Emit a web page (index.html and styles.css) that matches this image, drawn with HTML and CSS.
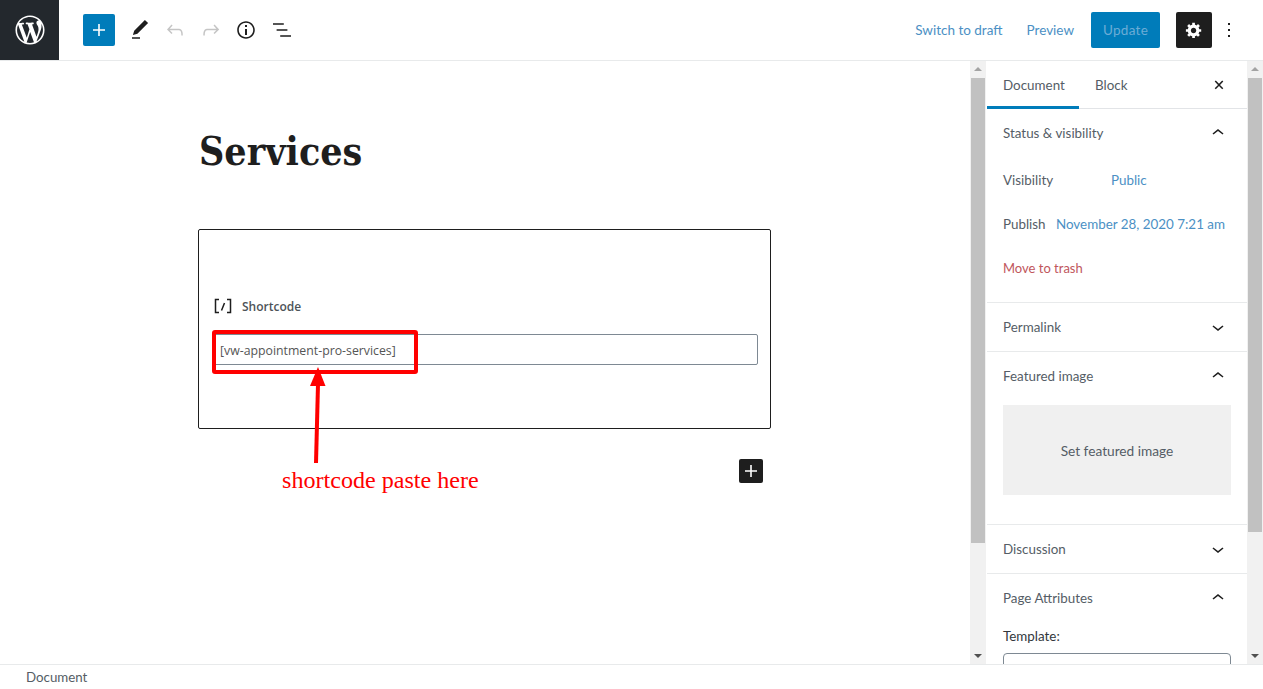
FILE: index.html
```html
<!DOCTYPE html>
<html lang="en">
<head>
    <meta charset="UTF-8">
    <meta name="viewport" content="width=device-width, initial-scale=1.0">
    <title>Edit Page</title>
    <link rel="stylesheet" href="styles.css">
</head>
<body>
    <div class="page">
        <header class="topbar">
            <div class="topbar-left">
                <a class="wp-logo" href="#">
                    <svg width="32" height="32" viewBox="-1 -1 22 22" fill="#fff"><path d="M20 10c0-5.51-4.49-10-10-10C4.48 0 0 4.49 0 10c0 5.52 4.48 10 10 10 5.51 0 10-4.48 10-10zM7.78 15.37L4.37 6.22c.55-.02 1.17-.08 1.17-.08.5-.06.44-1.13-.06-1.11 0 0-1.45.11-2.37.11-.18 0-.37 0-.58-.01C4.12 2.69 6.87 1.11 10 1.11c2.33 0 4.45.87 6.05 2.34-.68-.11-1.65.39-1.65 1.58 0 .74.45 1.36.9 2.1.35.61.55 1.36.55 2.46 0 1.49-1.4 5-1.4 5l-3.03-8.37c.54-.02.82-.17.82-.17.5-.05.44-1.25-.06-1.22 0 0-1.44.12-2.38.12-.87 0-2.33-.12-2.33-.12-.5-.03-.56 1.2-.06 1.22l.92.08 1.26 3.41zM17.41 10c.24-.64.74-1.87.43-4.25.7 1.29 1.05 2.71 1.05 4.25 0 3.29-1.73 6.24-4.4 7.78.97-2.59 1.94-5.2 2.92-7.78zM6.1 18.09C3.12 16.65 1.11 13.53 1.11 10c0-1.3.23-2.48.72-3.59C3.25 10.3 4.67 14.2 6.1 18.09zm4.03-6.63l2.58 6.98c-.86.29-1.76.45-2.71.45-.79 0-1.57-.11-2.29-.33.81-2.38 1.62-4.74 2.42-7.1z"/></svg>
                </a>
                <div class="tools">
                    <button class="inserter">
                        <svg width="24" height="24" viewBox="0 0 24 24" fill="#fff"><path d="M18 11.2h-5.2V6h-1.6v5.2H6v1.6h5.2V18h1.6v-5.2H18z"/></svg>
                    </button>
                    <button class="tool">
                        <svg width="24" height="24" viewBox="0 0 24 24" fill="#1e1e1e"><path d="M20.1 5.1L16.9 2 6.2 12.7l-1.3 4.4 4.5-1.3L20.1 5.1zM4 20.8h8v-1.5H4v1.5z"/></svg>
                    </button>
                    <button class="tool">
                        <svg width="24" height="24" viewBox="0 0 24 24" fill="#c5c5c5"><path d="M18.3 11.7c-.6-.6-1.4-.9-2.3-.9H6.7l2.9-3.3-1.1-1-4.5 5L8.5 16l1-1-2.7-2.7H16c.5 0 .9.2 1.3.5 1 1 1 3.4 1 4.5v.3h1.5v-.2c0-1.5 0-4.3-1.5-5.7z"/></svg>
                    </button>
                    <button class="tool">
                        <svg width="24" height="24" viewBox="0 0 24 24" fill="#c5c5c5"><path d="M15.6 6.5l-1.1 1 2.9 3.3H8c-.9 0-1.7.3-2.3.9-1.4 1.5-1.4 4.2-1.4 5.6v.2h1.5v-.3c0-1.1 0-3.5 1-4.5.3-.3.7-.5 1.3-.5h9.2L14.5 15l1.1 1.1 4.6-4.6-4.6-5z"/></svg>
                    </button>
                    <button class="tool">
                        <svg width="24" height="24" viewBox="0 0 24 24" fill="#1e1e1e"><path d="M12 3.2c-4.8 0-8.8 3.9-8.8 8.8 0 4.8 3.9 8.8 8.8 8.8 4.8 0 8.8-3.9 8.8-8.8 0-4.8-4-8.8-8.8-8.8zm0 16c-4 0-7.2-3.3-7.2-7.2C4.8 8 8 4.8 12 4.8s7.2 3.3 7.2 7.2c0 4-3.2 7.2-7.2 7.2zM11 17h2v-6h-2v6zm0-8h2V7h-2v2z"/></svg>
                    </button>
                    <button class="tool">
                        <svg width="24" height="24" viewBox="0 0 24 24" fill="#1e1e1e"><path d="M13.8 5.2H3v1.5h10.8V5.2zm-3.6 12v1.5H21v-1.5H10.2zm7.2-6H6.6v1.5h10.8v-1.5z"/></svg>
                    </button>
                </div>
            </div>
            <div class="topbar-right">
                <a class="top-link" href="#">Switch to draft</a>
                <a class="top-link preview-link" href="#">Preview</a>
                <button class="update-btn">Update</button>
                <button class="settings-btn">
                    <svg width="18" height="18" viewBox="0 0 20 20" fill="#fff"><path d="M18 12h-2.18c-.17.7-.44 1.35-.81 1.93l1.54 1.54-2.1 2.1-1.54-1.54c-.58.36-1.23.63-1.91.79V19H8v-2.18c-.68-.16-1.33-.43-1.91-.79l-1.54 1.54-2.12-2.12 1.54-1.54c-.36-.58-.63-1.23-.79-1.91H1V9.03h2.17c.16-.7.44-1.35.8-1.94L2.43 5.55l2.1-2.1 1.54 1.54c.58-.37 1.24-.64 1.93-.81V2h3v2.18c.68.16 1.33.43 1.91.79l1.54-1.54 2.12 2.12-1.54 1.54c.36.59.64 1.24.8 1.94H18V12zm-8.5 1.5c1.66 0 3-1.34 3-3s-1.34-3-3-3-3 1.34-3 3 1.34 3 3 3z"/></svg>
                </button>
                <button class="more-btn">
                    <svg width="24" height="24" viewBox="0 0 24 24" fill="#1e1e1e"><path d="M13 19h-2v-2h2v2zm0-6h-2v-2h2v2zm0-6h-2V5h2v2z"/></svg>
                </button>
            </div>
        </header>

        <div class="workspace">
            <main class="editor">
                <div class="editor-inner">
                    <h1 class="post-title">Services</h1>
                    <div class="shortcode-block">
                        <div class="shortcode-label">
                            <svg class="shortcode-icon" width="18" height="16" viewBox="0 0 18 16" fill="none" stroke="#1e1e1e" stroke-width="1.5"><path d="M5 1.5H1.500v13H5M13 1.500h3.500v13H13M7.500 12.500L10.500 5"/></svg>
                            <span>Shortcode</span>
                        </div>
                        <input class="shortcode-input" type="text" value="[vw-appointment-pro-services]">
                    </div>
                    <div class="add-row">
                        <button class="add-block">
                            <svg width="24" height="24" viewBox="0 0 24 24" fill="#fff"><path d="M18 11.2h-5.2V6h-1.6v5.2H6v1.6h5.2V18h1.6v-5.2H18z"/></svg>
                        </button>
                    </div>
                </div>
            </main>
            <div class="scrollbar">
                <span class="arrow-up"></span>
                <div class="track"><div class="thumb thumb-editor"></div></div>
                <span class="arrow-down"></span>
            </div>

            <aside class="sidebar">
                <div class="tabs">
                    <div class="tab tab-active">Document</div>
                    <div class="tab">Block</div>
                    <svg class="tabs-close" width="24" height="24" viewBox="0 0 24 24" fill="#1e1e1e"><path d="M13 11.9l3.3-3.4-1.1-1-3.2 3.3-3.2-3.3-1.1 1 3.3 3.4-3.3 3.3 1.1 1 3.2-3.2 3.2 3.3 1.1-1z"/></svg>
                </div>

                <section class="panel">
                    <div class="panel-head">
                        <span>Status &amp; visibility</span>
                        <svg width="24" height="24" viewBox="0 0 24 24" fill="#1e1e1e"><path d="M6.5 12.4L12 8l5.5 4.4-.9 1.2L12 10l-4.5 3.6-1-1.2z"/></svg>
                    </div>
                    <div class="panel-row">
                        <span class="row-label visibility-label">Visibility</span>
                        <a class="row-link" href="#">Public</a>
                    </div>
                    <div class="panel-row publish-row">
                        <span class="row-label">Publish</span>
                        <a class="row-link" href="#">November 28, 2020 7:21 am</a>
                    </div>
                    <div class="panel-row">
                        <a class="trash-link" href="#">Move to trash</a>
                    </div>
                </section>

                <section class="panel">
                    <div class="panel-head">
                        <span>Permalink</span>
                        <svg width="24" height="24" viewBox="0 0 24 24" fill="#1e1e1e"><path d="M17.5 11.6L12 16l-5.5-4.4.9-1.2L12 14l4.5-3.6 1 1.2z"/></svg>
                    </div>
                </section>

                <section class="panel">
                    <div class="panel-head">
                        <span>Featured image</span>
                        <svg width="24" height="24" viewBox="0 0 24 24" fill="#1e1e1e"><path d="M6.5 12.4L12 8l5.5 4.4-.9 1.2L12 10l-4.5 3.6-1-1.2z"/></svg>
                    </div>
                    <div class="featured-box">Set featured image</div>
                </section>

                <section class="panel">
                    <div class="panel-head">
                        <span>Discussion</span>
                        <svg width="24" height="24" viewBox="0 0 24 24" fill="#1e1e1e"><path d="M17.5 11.6L12 16l-5.5-4.4.9-1.2L12 14l4.5-3.6 1 1.2z"/></svg>
                    </div>
                </section>

                <section class="panel panel-last">
                    <div class="panel-head">
                        <span>Page Attributes</span>
                        <svg width="24" height="24" viewBox="0 0 24 24" fill="#1e1e1e"><path d="M6.5 12.4L12 8l5.5 4.4-.9 1.2L12 10l-4.5 3.6-1-1.2z"/></svg>
                    </div>
                    <label class="template-label">Template:</label>
                    <div class="template-select"></div>
                </section>
            </aside>
            <div class="scrollbar">
                <span class="arrow-up"></span>
                <div class="track"><div class="thumb thumb-sidebar"></div></div>
                <span class="arrow-down"></span>
            </div>
        </div>

        <footer class="statusbar">Document</footer>

        <!-- red annotation drawn on top of the screenshot -->
        <svg class="annotation" width="1263" height="689" viewBox="0 0 1263 689">
            <rect x="214" y="332" width="202" height="40" fill="none" stroke="#f00" stroke-width="4" rx="1"/>
            <path d="M316 463L318 384" stroke="#f00" stroke-width="4" fill="none"/>
            <path d="M318 367L325.500 386L310 386z" fill="#f00"/>
            <text class="annotation-text" x="282" y="488">shortcode paste here</text>
        </svg>
    </div>
</body>
</html>
```

FILE: styles.css
```css
* {
    box-sizing: border-box;
}
body {
    margin: 0;
    font-family: Lato, "Open Sans", sans-serif;
    font-size: 13.4px;
    color: #555d66;
    background-color: #fff;
}
button {
    border: none;
    padding: 0;
    background: none;
    display: flex;
    align-items: center;
    justify-content: center;
    font-family: inherit;
}
a {
    text-decoration: none;
}
.page {
    position: relative;
    width: 1263px;
    height: 689px;
    overflow: hidden;
    display: flex;
    flex-direction: column;
}

/* top bar */
.topbar {
    height: 61px;
    flex: none;
    display: flex;
    justify-content: space-between;
    border-bottom: 1px solid #e8eaeb;
}
.topbar-left {
    display: flex;
}
.wp-logo {
    width: 59px;
    height: 60px;
    background-color: #23282d;
    display: flex;
    align-items: center;
    justify-content: center;
}
.tools {
    display: flex;
    align-items: center;
    margin-left: 24px;
}
.inserter {
    width: 32px;
    height: 32px;
    margin-right: 7px;
    background-color: #007cba;
    border-radius: 2px;
}
.tool {
    width: 35.5px;
    height: 36px;
}
.topbar-right {
    display: flex;
    align-items: center;
    padding-right: 22px;
}
.top-link {
    color: #4b90c4;
    font-size: 13.5px;
    padding-bottom: 1px;
}
.preview-link {
    margin-left: 24px;
}
.update-btn {
    width: 69px;
    height: 36px;
    margin-left: 17px;
    background-color: #007cba;
    color: #6cacd6;
    border-radius: 2px;
    font-size: 13.5px;
    letter-spacing: 0.3px;
}
.settings-btn {
    width: 36px;
    height: 36px;
    margin-left: 16px;
    background-color: #1e1e1e;
    border-radius: 2px;
}
.more-btn {
    width: 24px;
    height: 36px;
    margin-left: 5px;
}

/* main area */
.workspace {
    flex: 1;
    min-height: 0;
    display: flex;
}
.editor {
    width: 970px;
    flex: none;
}
.editor-inner {
    width: 573px;
    margin-left: 198px;
}
.post-title {
    margin: 61px 0 0 1px;
    font-family: "DejaVu Serif Condensed", "DejaVu Serif", serif;
    font-size: 39px;
    line-height: 58px;
    font-weight: bold;
    color: #1e1e1e;
}
.shortcode-block {
    height: 200px;
    margin-top: 49px;
    padding: 66px 12px 0 15px;
    border: 1px solid #1e1e1e;
    border-radius: 2px;
}
.shortcode-label {
    display: flex;
    align-items: center;
    height: 20px;
    font-family: "Open Sans", sans-serif;
    font-size: 12px;
    font-weight: 600;
    color: #4d5358;
}
.shortcode-icon {
    margin-right: 10px;
}
.shortcode-input {
    display: block;
    width: 100%;
    height: 31px;
    margin-top: 18px;
    padding: 1px 5px 0;
    border: 1px solid #7e8993;
    border-radius: 2px;
    background-color: #fff;
    font-family: "Open Sans", sans-serif;
    font-size: 12.3px;
    color: #555;
}
.add-row {
    display: flex;
    justify-content: flex-end;
    padding: 30px 8px 0 0;
}
.add-block {
    width: 24px;
    height: 24px;
    background-color: #1e1e1e;
    border-radius: 2px;
}

/* scrollbars */
.scrollbar {
    width: 16px;
    flex: none;
    display: flex;
    flex-direction: column;
    align-items: center;
    background-color: #f1f1f1;
}
.track {
    flex: 1;
    width: 100%;
    padding: 0 1px;
}
.thumb {
    background-color: #c1c1c1;
}
.thumb-editor {
    height: 465px;
}
.thumb-sidebar {
    height: 454px;
}
.arrow-up,
.arrow-down {
    width: 0;
    height: 0;
    flex: none;
    border-left: 4px solid transparent;
    border-right: 4px solid transparent;
}
.arrow-up {
    margin: 6px 0 7px;
    border-bottom: 4px solid #a3a3a3;
}
.arrow-down {
    margin: 6px 0 6px;
    border-top: 4px solid #505050;
}

/* sidebar */
.sidebar {
    width: 260px;
    margin-left: 1px;
    flex: none;
    overflow: hidden;
}
.tabs {
    position: relative;
    display: flex;
    height: 48px;
    border-bottom: 1px solid #e2e4e7;
}
.tab {
    width: 92px;
    padding: 0 0 0 16px;
    line-height: 49px;
    color: #555d66;
}
.tab-active {
    box-shadow: inset 0 -3px 0 #007cba;
    height: 48px;
}
.tabs-close {
    margin: 12px 16px 0 auto;
}
.panel {
    padding: 0 16px;
    border-bottom: 1px solid #e8eaeb;
}
.panel-last {
    border-bottom: none;
}
.panel-head {
    height: 48px;
    padding: 0 1px 1px 0;
    display: flex;
    align-items: center;
    justify-content: space-between;
}
.panel-head svg {
    margin-bottom: -1px;
}
.panel-row {
    height: 44px;
    padding-top: 2px;
    display: flex;
    align-items: center;
}
.panel-row:last-child {
    margin-bottom: 13px;
}
.publish-row {
    justify-content: space-between;
    padding-right: 6px;
}
.visibility-label {
    width: 108px;
}
.row-link {
    color: #4b90c4;
}
.trash-link {
    color: #c0565c;
    font-size: 13px;
}
.featured-box {
    height: 90px;
    margin: 5px 0 29px;
    background-color: #f0f0f0;
    display: flex;
    align-items: center;
    justify-content: center;
    font-size: 13.7px;
    color: #555d66;
}
.template-label {
    display: block;
    margin-top: 6px;
    color: #32373c;
}
.template-select {
    height: 30px;
    margin-top: 9px;
    border: 1px solid #7e8993;
    border-radius: 4px;
}

/* status bar */
.statusbar {
    position: relative;
    height: 25px;
    flex: none;
    padding-left: 26px;
    line-height: 24px;
    font-size: 13.3px;
    background-color: #fff;
    border-top: 1px solid #e8eaeb;
    color: #555d66;
}

/* annotation */
.annotation {
    position: absolute;
    top: 0;
    left: 0;
    pointer-events: none;
}
.annotation-text {
    font-family: "Liberation Serif", serif;
    font-size: 24.1px;
    fill: #f00;
}
```
